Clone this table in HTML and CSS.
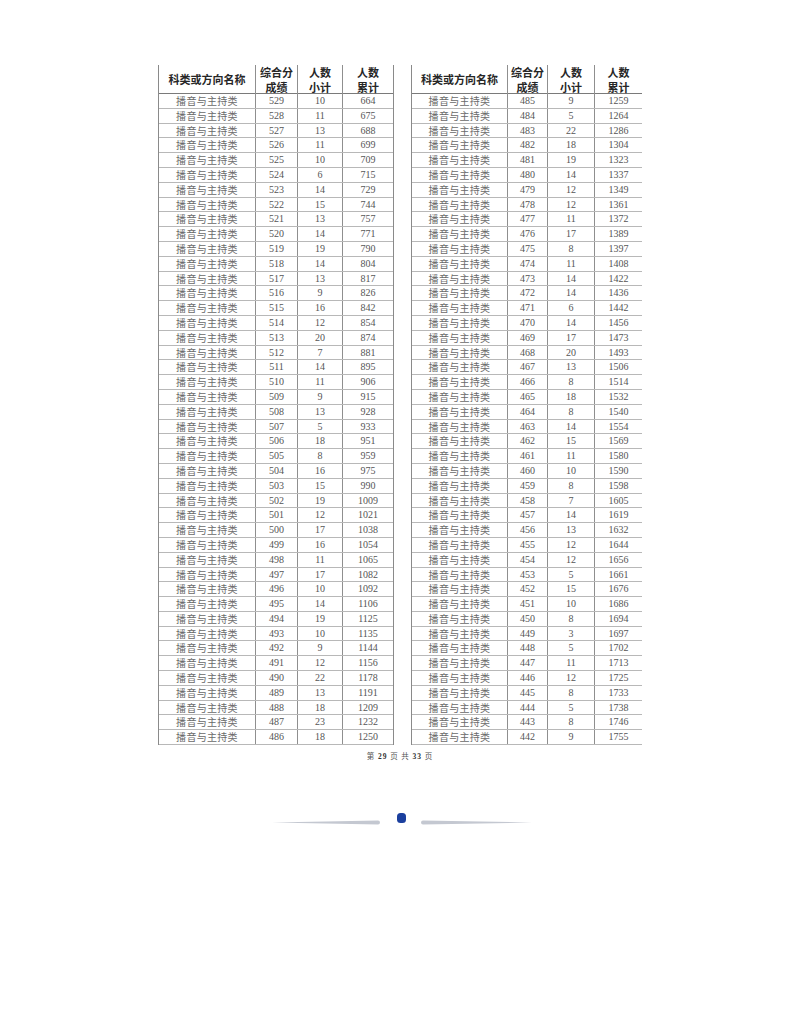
FILE: index.html
```html
<!DOCTYPE html>
<html lang="zh-CN">
<head>
<meta charset="utf-8">
<title>第29页</title>
<link rel="stylesheet" href="styles.css">
</head>
<body>
<div class="page">
  <div class="tables">
    <div class="tbl tbl-left">
      <div class="row head"><span class="hname">科类或方向名称</span><span>综合分<br>成绩</span><span>人数<br>小计</span><span>人数<br>累计</span></div>
      <div class="row"><span>播音与主持类</span><span>529</span><span>10</span><span>664</span></div>
      <div class="row"><span>播音与主持类</span><span>528</span><span>11</span><span>675</span></div>
      <div class="row"><span>播音与主持类</span><span>527</span><span>13</span><span>688</span></div>
      <div class="row"><span>播音与主持类</span><span>526</span><span>11</span><span>699</span></div>
      <div class="row"><span>播音与主持类</span><span>525</span><span>10</span><span>709</span></div>
      <div class="row"><span>播音与主持类</span><span>524</span><span>6</span><span>715</span></div>
      <div class="row"><span>播音与主持类</span><span>523</span><span>14</span><span>729</span></div>
      <div class="row"><span>播音与主持类</span><span>522</span><span>15</span><span>744</span></div>
      <div class="row"><span>播音与主持类</span><span>521</span><span>13</span><span>757</span></div>
      <div class="row"><span>播音与主持类</span><span>520</span><span>14</span><span>771</span></div>
      <div class="row"><span>播音与主持类</span><span>519</span><span>19</span><span>790</span></div>
      <div class="row"><span>播音与主持类</span><span>518</span><span>14</span><span>804</span></div>
      <div class="row"><span>播音与主持类</span><span>517</span><span>13</span><span>817</span></div>
      <div class="row"><span>播音与主持类</span><span>516</span><span>9</span><span>826</span></div>
      <div class="row"><span>播音与主持类</span><span>515</span><span>16</span><span>842</span></div>
      <div class="row"><span>播音与主持类</span><span>514</span><span>12</span><span>854</span></div>
      <div class="row"><span>播音与主持类</span><span>513</span><span>20</span><span>874</span></div>
      <div class="row"><span>播音与主持类</span><span>512</span><span>7</span><span>881</span></div>
      <div class="row"><span>播音与主持类</span><span>511</span><span>14</span><span>895</span></div>
      <div class="row"><span>播音与主持类</span><span>510</span><span>11</span><span>906</span></div>
      <div class="row"><span>播音与主持类</span><span>509</span><span>9</span><span>915</span></div>
      <div class="row"><span>播音与主持类</span><span>508</span><span>13</span><span>928</span></div>
      <div class="row"><span>播音与主持类</span><span>507</span><span>5</span><span>933</span></div>
      <div class="row"><span>播音与主持类</span><span>506</span><span>18</span><span>951</span></div>
      <div class="row"><span>播音与主持类</span><span>505</span><span>8</span><span>959</span></div>
      <div class="row"><span>播音与主持类</span><span>504</span><span>16</span><span>975</span></div>
      <div class="row"><span>播音与主持类</span><span>503</span><span>15</span><span>990</span></div>
      <div class="row"><span>播音与主持类</span><span>502</span><span>19</span><span>1009</span></div>
      <div class="row"><span>播音与主持类</span><span>501</span><span>12</span><span>1021</span></div>
      <div class="row"><span>播音与主持类</span><span>500</span><span>17</span><span>1038</span></div>
      <div class="row"><span>播音与主持类</span><span>499</span><span>16</span><span>1054</span></div>
      <div class="row"><span>播音与主持类</span><span>498</span><span>11</span><span>1065</span></div>
      <div class="row"><span>播音与主持类</span><span>497</span><span>17</span><span>1082</span></div>
      <div class="row"><span>播音与主持类</span><span>496</span><span>10</span><span>1092</span></div>
      <div class="row"><span>播音与主持类</span><span>495</span><span>14</span><span>1106</span></div>
      <div class="row"><span>播音与主持类</span><span>494</span><span>19</span><span>1125</span></div>
      <div class="row"><span>播音与主持类</span><span>493</span><span>10</span><span>1135</span></div>
      <div class="row"><span>播音与主持类</span><span>492</span><span>9</span><span>1144</span></div>
      <div class="row"><span>播音与主持类</span><span>491</span><span>12</span><span>1156</span></div>
      <div class="row"><span>播音与主持类</span><span>490</span><span>22</span><span>1178</span></div>
      <div class="row"><span>播音与主持类</span><span>489</span><span>13</span><span>1191</span></div>
      <div class="row"><span>播音与主持类</span><span>488</span><span>18</span><span>1209</span></div>
      <div class="row"><span>播音与主持类</span><span>487</span><span>23</span><span>1232</span></div>
      <div class="row"><span>播音与主持类</span><span>486</span><span>18</span><span>1250</span></div>
    </div>
    <div class="tbl tbl-right">
      <div class="row head"><span class="hname">科类或方向名称</span><span>综合分<br>成绩</span><span>人数<br>小计</span><span>人数<br>累计</span></div>
      <div class="row"><span>播音与主持类</span><span>485</span><span>9</span><span>1259</span></div>
      <div class="row"><span>播音与主持类</span><span>484</span><span>5</span><span>1264</span></div>
      <div class="row"><span>播音与主持类</span><span>483</span><span>22</span><span>1286</span></div>
      <div class="row"><span>播音与主持类</span><span>482</span><span>18</span><span>1304</span></div>
      <div class="row"><span>播音与主持类</span><span>481</span><span>19</span><span>1323</span></div>
      <div class="row"><span>播音与主持类</span><span>480</span><span>14</span><span>1337</span></div>
      <div class="row"><span>播音与主持类</span><span>479</span><span>12</span><span>1349</span></div>
      <div class="row"><span>播音与主持类</span><span>478</span><span>12</span><span>1361</span></div>
      <div class="row"><span>播音与主持类</span><span>477</span><span>11</span><span>1372</span></div>
      <div class="row"><span>播音与主持类</span><span>476</span><span>17</span><span>1389</span></div>
      <div class="row"><span>播音与主持类</span><span>475</span><span>8</span><span>1397</span></div>
      <div class="row"><span>播音与主持类</span><span>474</span><span>11</span><span>1408</span></div>
      <div class="row"><span>播音与主持类</span><span>473</span><span>14</span><span>1422</span></div>
      <div class="row"><span>播音与主持类</span><span>472</span><span>14</span><span>1436</span></div>
      <div class="row"><span>播音与主持类</span><span>471</span><span>6</span><span>1442</span></div>
      <div class="row"><span>播音与主持类</span><span>470</span><span>14</span><span>1456</span></div>
      <div class="row"><span>播音与主持类</span><span>469</span><span>17</span><span>1473</span></div>
      <div class="row"><span>播音与主持类</span><span>468</span><span>20</span><span>1493</span></div>
      <div class="row"><span>播音与主持类</span><span>467</span><span>13</span><span>1506</span></div>
      <div class="row"><span>播音与主持类</span><span>466</span><span>8</span><span>1514</span></div>
      <div class="row"><span>播音与主持类</span><span>465</span><span>18</span><span>1532</span></div>
      <div class="row"><span>播音与主持类</span><span>464</span><span>8</span><span>1540</span></div>
      <div class="row"><span>播音与主持类</span><span>463</span><span>14</span><span>1554</span></div>
      <div class="row"><span>播音与主持类</span><span>462</span><span>15</span><span>1569</span></div>
      <div class="row"><span>播音与主持类</span><span>461</span><span>11</span><span>1580</span></div>
      <div class="row"><span>播音与主持类</span><span>460</span><span>10</span><span>1590</span></div>
      <div class="row"><span>播音与主持类</span><span>459</span><span>8</span><span>1598</span></div>
      <div class="row"><span>播音与主持类</span><span>458</span><span>7</span><span>1605</span></div>
      <div class="row"><span>播音与主持类</span><span>457</span><span>14</span><span>1619</span></div>
      <div class="row"><span>播音与主持类</span><span>456</span><span>13</span><span>1632</span></div>
      <div class="row"><span>播音与主持类</span><span>455</span><span>12</span><span>1644</span></div>
      <div class="row"><span>播音与主持类</span><span>454</span><span>12</span><span>1656</span></div>
      <div class="row"><span>播音与主持类</span><span>453</span><span>5</span><span>1661</span></div>
      <div class="row"><span>播音与主持类</span><span>452</span><span>15</span><span>1676</span></div>
      <div class="row"><span>播音与主持类</span><span>451</span><span>10</span><span>1686</span></div>
      <div class="row"><span>播音与主持类</span><span>450</span><span>8</span><span>1694</span></div>
      <div class="row"><span>播音与主持类</span><span>449</span><span>3</span><span>1697</span></div>
      <div class="row"><span>播音与主持类</span><span>448</span><span>5</span><span>1702</span></div>
      <div class="row"><span>播音与主持类</span><span>447</span><span>11</span><span>1713</span></div>
      <div class="row"><span>播音与主持类</span><span>446</span><span>12</span><span>1725</span></div>
      <div class="row"><span>播音与主持类</span><span>445</span><span>8</span><span>1733</span></div>
      <div class="row"><span>播音与主持类</span><span>444</span><span>5</span><span>1738</span></div>
      <div class="row"><span>播音与主持类</span><span>443</span><span>8</span><span>1746</span></div>
      <div class="row"><span>播音与主持类</span><span>442</span><span>9</span><span>1755</span></div>
    </div>
  </div>
  <div class="pageno">第 <b>29</b> 页 共 <b>33</b> 页</div>
  <div class="divider">
    <svg width="260" height="14" viewBox="0 0 260 14">
      <path d="M0 9.5 L106 7.5 A2 2 0 0 1 106 11.5 Z" fill="#c4c8d1"/>
      <rect x="125" y="0" width="9" height="10" rx="3.5" fill="#1b3f9e"/>
      <path d="M260 9.5 L151 7.5 A2 2 0 0 0 151 11.5 Z" fill="#c4c8d1"/>
    </svg>
  </div>
</div>
</body>
</html>
```
FILE: styles.css
```css
html, body {
  margin: 0;
  padding: 0;
  background: #ffffff;
}

.page {
  width: 800px;
  padding-top: 65px;
  font-family: "Liberation Serif", "Noto Sans CJK SC", serif;
  color: #555;
}

.tables {
  display: flex;
  gap: 17px;
  margin-left: 158px;
}

.tbl {
  display: flex;
  flex-direction: column;
  border-left: 1px solid #8a8a8a;
}

.tbl-left {
  width: 234px;
  border-right: 1px solid #8a8a8a;
}

.tbl-right {
  width: 230px;
}

.row {
  display: grid;
  height: 14.8px;
  box-sizing: border-box;
  border-bottom: 1px solid #b8b8b8;
  font-size: 10px;
  line-height: 13.8px;
}

.tbl-left .row {
  grid-template-columns: 96px 42px 45px 1fr;
}

.tbl-right .row {
  grid-template-columns: 95px 40px 47px 1fr;
}

.row span {
  display: block;
  text-align: center;
  white-space: nowrap;
}

.row span + span {
  border-left: 1px solid #8f8f8f;
}

.row span:first-child {
  font-family: "Noto Sans CJK SC", sans-serif;
  font-size: 10px;
  color: #6a6a6a;
  letter-spacing: 0.3px;
}

.row.head {
  height: 29px;
  border-bottom: 1px solid #7a7a7a;
}

.row.head span {
  font-family: "Noto Sans CJK SC", sans-serif;
  font-weight: 700;
  color: #262626;
  font-size: 11px;
  line-height: 14.5px;
  padding-top: 0;
}

.row.head span.hname {
  font-size: 11px;
  line-height: 28px;
  color: #262626;
  letter-spacing: 0;
}

.pageno {
  margin-top: 6px;
  text-align: center;
  font-family: "Noto Sans CJK SC", sans-serif;
  font-size: 7.5px;
  color: #555;
  letter-spacing: 1px;
  line-height: 10px;
}

.pageno b {
  font-family: "Liberation Serif", serif;
  font-weight: 700;
  color: #333;
}

.divider {
  display: flex;
  justify-content: center;
  margin-top: 51px;
  padding-left: 4px;
}
```
